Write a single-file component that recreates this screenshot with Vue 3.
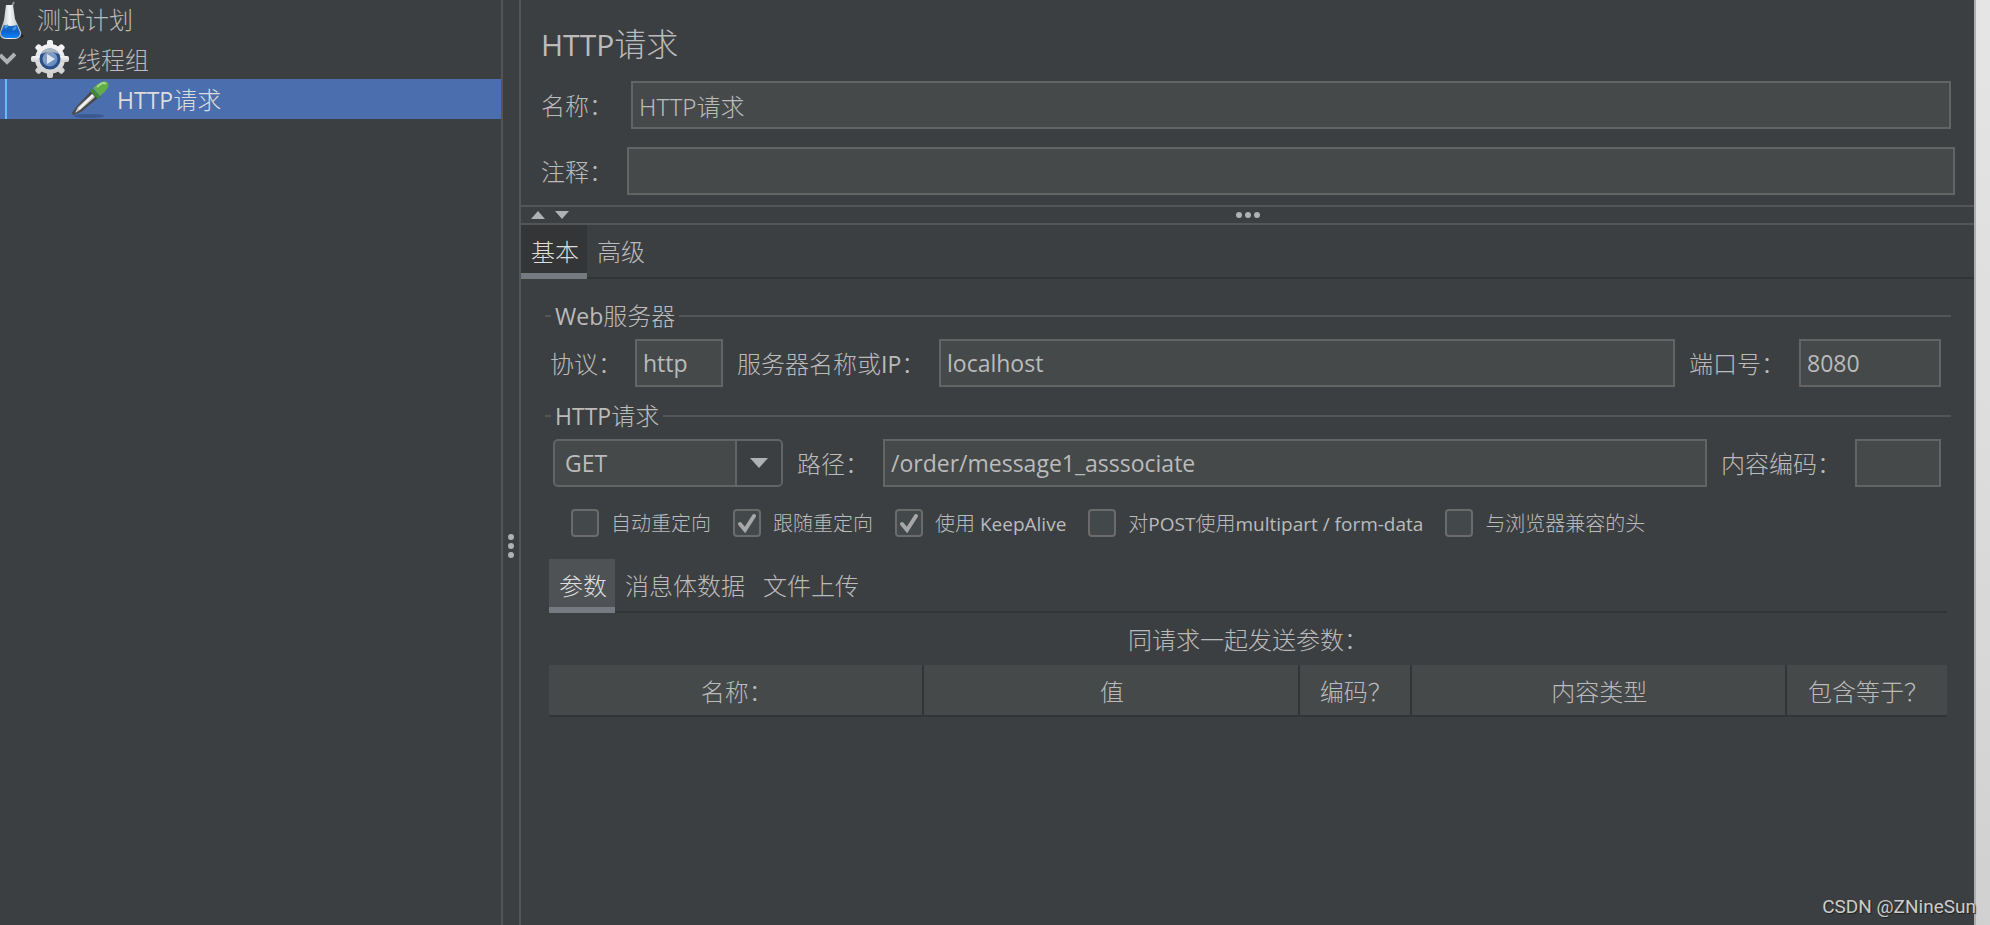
<script setup>
import { ref } from 'vue'

const name = ref('HTTP请求')
const comment = ref('')
const protocol = ref('http')
const server = ref('localhost')
const port = ref('8080')
const method = ref('GET')
const path = ref('/order/message1_asssociate')
const encoding = ref('')

const methods = ['GET', 'POST', 'PUT', 'DELETE', 'HEAD']
const mainTabs = ['基本', '高级']
const mainTab = ref('基本')
const bodyTabs = ['参数', '消息体数据', '文件上传']
const bodyTab = ref('参数')

const options = ref([
  { id: 'auto', label: '自动重定向', on: false },
  { id: 'follow', label: '跟随重定向', on: true },
  { id: 'keep', label: '使用 KeepAlive', on: true },
  { id: 'multipart', label: '对POST使用multipart / form-data', on: false },
  { id: 'compat', label: '与浏览器兼容的头', on: false },
])

// Splits a label into runs, so that Latin and Chinese can be set differently
const runs = (text) =>
  text.split(/([\x20-\x7e]+)/).filter(Boolean).map((t) => ({ t, latin: /^[\x20-\x7e]/.test(t) }))

const columns = [
  { label: '名称：', cls: 'wide' },
  { label: '值', cls: 'wide' },
  { label: '编码？', cls: 'narrow' },
  { label: '内容类型', cls: 'wide' },
  { label: '包含等于？', cls: 'medium' },
]
</script>

<template>
  <div class="window" lang="zh-CN">
    <nav class="tree" aria-label="测试计划">
      <a href="#" class="node plan">
        <svg class="flask" width="24" height="38" viewBox="0 0 24 38">
          <defs>
            <linearGradient id="glass" x1="0" x2="1" y1="0" y2="0">
              <stop offset="0" stop-color="#a9adb0" />
              <stop offset="0.45" stop-color="#f4f5f6" />
              <stop offset="1" stop-color="#b4b7ba" />
            </linearGradient>
            <linearGradient id="liquid" x1="0" x2="0" y1="0" y2="1">
              <stop offset="0" stop-color="#1f6fc0" />
              <stop offset="0.5" stop-color="#0f62c8" />
              <stop offset="1" stop-color="#0a84ff" />
            </linearGradient>
          </defs>
          <ellipse cx="12" cy="35" rx="12" ry="3" fill="#25282a" />
          <path d="M12 5 L14 1" stroke="#8d8f91" stroke-width="2" />
          <path d="M6 4 H13 L15 18 L21 31 Q22 37 15 38 H5 Q-1 37 0 31 L4 19 Z" fill="url(#glass)" />
          <path d="M4 24 Q10 26 17 24 L20 32 Q20 37 14 37 H6 Q0 36 1 31 Z" fill="url(#liquid)" />
          <path d="M5 27 L8 24 M13 29 L16 26" stroke="#4e9be8" stroke-width="2" />
        </svg>
        <span>测试计划</span>
      </a>
      <a href="#" class="node group">
        <svg width="16" height="14" viewBox="0 0 16 14">
          <path d="M0 3 L7 10 L15 2" fill="none" stroke="#afb1b3" stroke-width="4" />
        </svg>
        <svg class="gear" width="38" height="38" viewBox="0 0 38 38">
          <defs>
            <linearGradient id="metal" x1="0" x2="0" y1="0" y2="1">
              <stop offset="0" stop-color="#f6f6f6" />
              <stop offset="1" stop-color="#cfcfcf" />
            </linearGradient>
            <linearGradient id="hub" x1="0" x2="1" y1="0" y2="1">
              <stop offset="0" stop-color="#8f9fb6" />
              <stop offset="0.5" stop-color="#7d9bc8" />
              <stop offset="1" stop-color="#4b7cc4" />
            </linearGradient>
          </defs>
          <g fill="url(#metal)">
            <circle cx="19" cy="19" r="15" />
            <rect x="16" y="0" width="6" height="38" rx="2" />
            <rect x="0" y="16" width="38" height="6" rx="2" />
            <rect x="16" y="0" width="6" height="38" rx="2" transform="rotate(45 19 19)" />
            <rect x="16" y="0" width="6" height="38" rx="2" transform="rotate(-45 19 19)" />
          </g>
          <circle cx="19" cy="19" r="9" fill="url(#hub)" stroke="#2d4f88" stroke-width="3" />
          <path d="M10 14 A10 10 0 0 1 28 14 Q19 10 10 14Z" fill="#a9b4c3" />
          <path d="M16 14 L24 19 L16 24 Z" fill="#dfe6f0" />
        </svg>
        <span>线程组</span>
      </a>
      <a href="#" class="node request" aria-current="true">
        <svg class="pipette" width="38" height="38" viewBox="0 0 38 38">
          <ellipse cx="18" cy="36" rx="15" ry="2" fill="#3c588d" />
          <path d="M20 11 L27 18 L10 32 L2 35 L1 33 L6 26 Z" fill="#4a4a4a" />
          <path d="M21 14 L24 17 L9 30 L4 33 L7 27 Z" fill="#c9cbcd" />
          <path d="M22 15 L8 29" stroke="#f5f5f5" stroke-width="2" />
          <path d="M20 8 L30 17 L27 19 L19 11 Z" fill="#3f8a35" />
          <path d="M22 8 L27 4 Q34 -1 37 3 Q39 8 31 14 L29 16 Z" fill="#62ad49" />
          <path d="M26 7 Q32 1 35 4" fill="none" stroke="#a5da8e" stroke-width="2" />
        </svg>
        <span><span class="latin">HTTP</span>请求</span>
      </a>
    </nav>

    <div class="divider" role="separator">
      <i></i><i></i><i></i>
    </div>

    <main class="panel">
      <header class="head">
        <h1><span class="latin">HTTP</span>请求</h1>
        <div class="field first">
          <label for="name">名称：</label>
          <input id="name" v-model="name" type="text" />
        </div>
        <div class="field second">
          <label for="comment">注释：</label>
          <input id="comment" v-model="comment" type="text" />
        </div>
      </header>

      <div class="splitter" role="separator">
        <button type="button" aria-label="向上折叠">
          <svg width="14" height="8" viewBox="0 0 14 8"><path d="M0 8 L7 0 L14 8Z" fill="#afb1b3" /></svg>
        </button>
        <button type="button" aria-label="向下折叠">
          <svg width="14" height="8" viewBox="0 0 14 8"><path d="M0 0 L7 8 L14 0Z" fill="#afb1b3" /></svg>
        </button>
        <div class="grip"><i></i><i></i><i></i></div>
      </div>

      <div class="tabs main-tabs" role="tablist">
        <button
          v-for="t in mainTabs"
          :key="t"
          type="button"
          role="tab"
          :aria-selected="t === mainTab"
          :class="{ active: t === mainTab }"
          @click="mainTab = t"
        >{{ t }}</button>
      </div>

      <section class="content">
        <fieldset>
          <legend><span><span class="latin">Web</span>服务器</span></legend>
          <div class="row web">
            <label for="protocol" class="l-protocol">协议：</label>
            <input id="protocol" v-model="protocol" class="latin i-protocol" type="text" />
            <label for="server" class="l-server">服务器名称或<span class="latin">IP</span>：</label>
            <input id="server" v-model="server" class="latin grow" type="text" />
            <label for="port" class="l-port">端口号：</label>
            <input id="port" v-model="port" class="latin i-port" type="text" />
          </div>
        </fieldset>

        <fieldset class="http">
          <legend><span><span class="latin">HTTP</span>请求</span></legend>
          <div class="row">
            <div class="combo">
              <select v-model="method" class="latin" aria-label="HTTP请求">
                <option v-for="m in methods" :key="m">{{ m }}</option>
              </select>
              <span class="arrow">
                <svg width="18" height="10" viewBox="0 0 18 10"><path d="M0 0 H18 L9 10Z" fill="#afb1b3" /></svg>
              </span>
            </div>
            <label for="path" class="l-path">路径：</label>
            <input id="path" v-model="path" class="latin grow" type="text" />
            <label for="encoding" class="l-encoding">内容编码：</label>
            <input id="encoding" v-model="encoding" class="latin i-encoding" type="text" />
          </div>

          <div class="options">
            <label v-for="o in options" :key="o.id" :for="o.id">
              <span class="box">
                <input :id="o.id" v-model="o.on" type="checkbox" />
                <svg v-if="o.on" width="28" height="28" viewBox="0 0 28 28">
                  <path d="M7 15 L12 21 L21 7" fill="none" stroke="#a7a7a7" stroke-width="4" stroke-linecap="round" />
                </svg>
              </span>
              <span class="text"><span v-for="r in runs(o.label)" :key="r.t" :class="{ latin: r.latin }">{{ r.t }}</span></span>
            </label>
          </div>
        </fieldset>

        <div class="params">
          <div class="tabs body-tabs" role="tablist">
            <button
              v-for="t in bodyTabs"
              :key="t"
              type="button"
              role="tab"
              :aria-selected="t === bodyTab"
              :class="{ active: t === bodyTab }"
              @click="bodyTab = t"
            >{{ t }}</button>
          </div>
          <table>
            <caption>同请求一起发送参数：</caption>
            <thead>
              <tr>
                <th v-for="c in columns" :key="c.label" scope="col" :class="c.cls">{{ c.label }}</th>
              </tr>
            </thead>
          </table>
        </div>
      </section>
    </main>

    <div class="edge"></div>
    <div class="watermark">CSDN @ZNineSun</div>
  </div>
</template>

<style>
html,
body {
  background: #3c3f41;
}
</style>

<style scoped>
.window {
  position: relative;
  display: flex;
  box-sizing: border-box;
  min-height: 100vh;
  background: #3c3f41;
  color: #bbbbbb;
  font-family: "Noto Sans", "Noto Sans CJK SC", sans-serif;
  font-size: 24px;
  font-weight: 300;
  line-height: 32px;
  white-space: nowrap;
}

.window *,
.window *::before,
.window *::after {
  box-sizing: border-box;
}

input,
select,
button {
  margin: 0;
  color: inherit;
  font: inherit;
}

.latin {
  font-family: "Open Sans", sans-serif;
  font-size: 23px;
  font-weight: 400;
  line-height: 1;
}

/* Tree */
.tree {
  flex: 0 0 501px;
  overflow: hidden;
}

.node {
  display: flex;
  align-items: center;
  height: 40px;
  color: inherit;
  text-decoration: none;
}

.node svg {
  flex: none;
}

.plan {
  height: 39px;
  gap: 13px;
}

.group > span,
.request > span {
  padding-top: 2px;
}

.group .gear {
  margin: 0 8px 0 15px;
}

.request {
  position: relative;
  gap: 8px;
  padding-left: 71px;
  background: #4b6eaf;
  color: #dddddd;
}

.request::before {
  content: "";
  position: absolute;
  top: 0;
  bottom: 0;
  left: 5px;
  width: 2px;
  background: #6cb8ff;
}

.divider {
  display: flex;
  flex: 0 0 20px;
  flex-direction: column;
  align-items: center;
  gap: 3px;
  padding-top: 534px;
  border: solid #555555;
  border-width: 0 2px;
}

.divider i,
.grip i {
  width: 6px;
  height: 6px;
  border-radius: 50%;
  background: #afb1b3;
}

/* Right panel */
.panel {
  flex: 1;
  min-width: 0;
}

.head {
  height: 205px;
  padding: 22px 19px 0 20px;
}

h1 {
  margin: 0;
  font-size: 32px;
  font-weight: 300;
  line-height: 44px;
}

h1 .latin {
  font-size: 30px;
}

.field {
  display: flex;
  align-items: center;
}

.field label,
.row label {
  padding-top: 2px;
}

.field.first {
  margin: 15px 4px 18px 0;
}

.field.first label {
  width: 90px;
}

.field.second label {
  width: 86px;
}

input[type="text"] {
  width: 0;
  height: 48px;
  padding: 0 6px;
  border: 2px solid #646464;
  border-radius: 0;
  outline: none;
  background: #45494a;
}

.field input[type="text"],
input.grow[type="text"] {
  flex: 1;
}

.splitter {
  position: relative;
  display: flex;
  align-items: center;
  gap: 10px;
  height: 20px;
  padding-left: 10px;
  border: solid #555555;
  border-width: 2px 0;
}

.splitter button {
  display: flex;
  padding: 0;
  border: 0;
  background: none;
}

.grip {
  position: absolute;
  inset: 0;
  display: flex;
  align-items: center;
  justify-content: center;
  gap: 3px;
  pointer-events: none;
}

.tabs {
  display: flex;
  height: 54px;
  box-shadow: inset 0 -2px #323537;
}

.tabs button {
  padding: 5px 8px 0 10px;
  border: solid transparent;
  border-width: 0 0 6px;
  background: none;
}

.tabs .active {
  border-color: #747a80;
  color: #dddddd;
}

.main-tabs .active {
  background: #333537;
}

.body-tabs .active {
  background: #4e5254;
}

.content {
  padding: 20px 23px 0 24px;
}

fieldset {
  min-width: 0;
  margin: 0;
  padding: 0;
  border: 0;
}

legend {
  display: flex;
  align-items: center;
  gap: 4px;
  width: 100%;
  height: 34px;
  padding: 0;
}

legend::before,
legend::after {
  content: "";
  height: 2px;
  background: #555555;
}

legend::before {
  width: 6px;
}

legend::after {
  flex: 1;
}

.row {
  display: flex;
  align-items: center;
  padding: 6px 10px 0 8px;
}

.row.web {
  padding-left: 5px;
}

.http {
  margin-top: 12px;
}

.l-protocol {
  width: 85px;
}

input.i-protocol {
  width: 88px;
}

.l-server {
  width: 216px;
  padding-left: 14px;
}

.l-port {
  width: 124px;
  padding-left: 14px;
}

input.i-port {
  width: 142px;
}

.combo {
  position: relative;
  width: 230px;
  height: 48px;
}

.combo select {
  width: 100%;
  height: 100%;
  padding: 0 50px 0 10px;
  border: 2px solid #646464;
  border-radius: 5px;
  outline: none;
  appearance: none;
  background: #45494a;
}

.arrow {
  position: absolute;
  top: 2px;
  right: 2px;
  bottom: 2px;
  display: flex;
  align-items: center;
  justify-content: center;
  width: 46px;
  border-left: 2px solid #646464;
  border-radius: 0 3px 3px 0;
  background: #3c3f41;
  pointer-events: none;
}

.l-path {
  width: 100px;
  padding-left: 14px;
}

.l-encoding {
  width: 148px;
  padding-left: 14px;
}

input.i-encoding {
  width: 86px;
}

.options {
  display: flex;
  gap: 22px;
  padding: 22px 0 0 26px;
  font-size: 20px;
  line-height: 28px;
}

.options label {
  display: flex;
  gap: 12px;
  height: 28px;
}

.options .text {
  padding-top: 1px;
  white-space: pre;
}

.options .latin {
  font-size: 19px;
}

.box {
  position: relative;
  width: 28px;
  height: 28px;
}

.box input {
  display: block;
  width: 28px;
  height: 28px;
  border: 2px solid #6b6b6b;
  border-radius: 4px;
  appearance: none;
  background: #43494a;
}

.box svg {
  position: absolute;
  inset: 0;
  pointer-events: none;
}

.params {
  margin: 22px 4px 0;
}

table {
  width: 100%;
  table-layout: fixed;
  border-spacing: 0;
}

caption {
  height: 52px;
  padding-top: 1px;
  line-height: 51px;
}

th {
  height: 52px;
  padding: 3px 0 0 2px;
  border: solid #323537;
  border-width: 0 2px 2px 0;
  background: #45494a;
  font-weight: inherit;
}

th:last-child {
  border-right: 0;
}

.narrow {
  width: 112px;
}

.medium {
  width: 160px;
}

/* Neighbouring window at the right side */
.edge {
  flex: 0 0 16px;
  border-left: 2px solid #aeaeae;
  background: linear-gradient(180deg, #e5e5e5, #dcdcdc 50%, #d0d0d0);
}

.watermark {
  position: absolute;
  right: 14px;
  bottom: 6px;
  color: #cccccc;
  font-family: Roboto, sans-serif;
  font-size: 19px;
  font-weight: 400;
  line-height: 24px;
  text-shadow: 1px 1px 1px #222222;
}
</style>
